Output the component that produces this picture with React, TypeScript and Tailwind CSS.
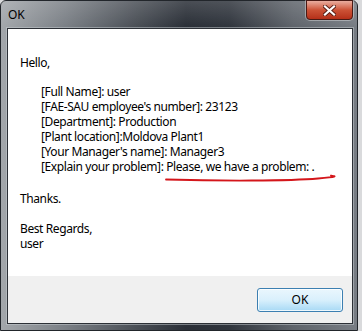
import React from 'react';

const lines = [
  "[Full Name]: user",
  "[FAE-SAU employee's number]: 23123",
  '[Department]: Production',
  '[Plant location]:Moldova Plant1',
  "[Your Manager's name]: Manager3",
];

const App: React.FC = () => {
  return (
    <div
      className="relative w-[362px] h-[331px] overflow-hidden bg-[#d9dadc] select-none"
      style={{ fontFamily: '"Noto Sans", "Open Sans", sans-serif' }}
    >
      {/* window frame */}
      <div className="absolute inset-0 right-[4px] rounded-t-[6px] border border-[#22262b] bg-[linear-gradient(90deg,#a3a7ab_0%,#7b8086_18%,#4a4f56_38%,#2a2f37_52%,#30353d_64%,#5f646b_82%,#787d84_100%)] flex flex-col">
        <div className="absolute left-0 right-0 top-0 h-[26px] bg-gradient-to-b from-white/15 to-transparent pointer-events-none" />

        {/* title bar */}
        <div className="relative h-[27px] flex items-center pl-[7px] text-[12px] text-black">
          OK
        </div>

        {/* close button */}
        <div className="absolute top-[-1px] left-[305px] w-[47px] h-[20px] rounded-b-[4px] border border-[#4a1a14] bg-gradient-to-b from-[#e8ad9f] via-[#cc5236] to-[#b52f18] flex items-center justify-center shadow-[0_0_0_1px_rgba(255,255,255,0.35)]">
          <svg width="13" height="11" viewBox="0 0 13 11">
            <path d="M2 1.5 L11 9.5 M11 1.5 L2 9.5" stroke="#5a1f16" strokeWidth="4" strokeLinecap="square" />
            <path d="M2 1.5 L11 9.5 M11 1.5 L2 9.5" stroke="#ffffff" strokeWidth="2.2" strokeLinecap="square" />
          </svg>
        </div>

        {/* client area */}
        <div className="relative ml-[6px] mr-[4px] mb-[6px] flex-1 flex flex-col border border-[#2c3036] shadow-[0_0_0_1px_rgba(200,205,210,0.5)]">
          <div className="flex-1 bg-white pl-[12px] pt-[26px] text-[12px] leading-[15px] tracking-[-0.4px] text-black">
            <div>Hello,</div>
            <div className="pl-[21px] mt-[14px] flex flex-col">
              {lines.map((l) => (
                <div key={l}>{l}</div>
              ))}
              <div className="whitespace-nowrap">
                [Explain your problem]: Please, we have a problem: .
              </div>
            </div>
            <div className="mt-[17px]">Thanks.</div>
            <div className="mt-[15px]">Best Regards,</div>
            <div>user</div>
          </div>
          <div className="h-[47px] bg-[#f0f0f0] flex items-center justify-end pr-[9px]">
            <div className="w-[86px] h-[24px] rounded-[3px] border border-[#3c7fb1] bg-gradient-to-b from-[#eaf6fd] via-[#d9f0fc] to-[#a7d9f5] shadow-[inset_0_0_0_1px_rgba(255,255,255,0.8)] flex items-center justify-center text-[12px] text-black">
              OK
            </div>
          </div>
        </div>
      </div>

      {/* red annotation underline */}
      <svg className="absolute left-0 top-0 pointer-events-none" width="362" height="331">
        <path
          d="M166 179.5 C 220 181, 290 181, 318 178.5 S 330 176, 331 175.5"
          stroke="#d4161b"
          strokeWidth="1.8"
          fill="none"
          strokeLinecap="round"
        />
      </svg>
    </div>
  );
};

export default App;
